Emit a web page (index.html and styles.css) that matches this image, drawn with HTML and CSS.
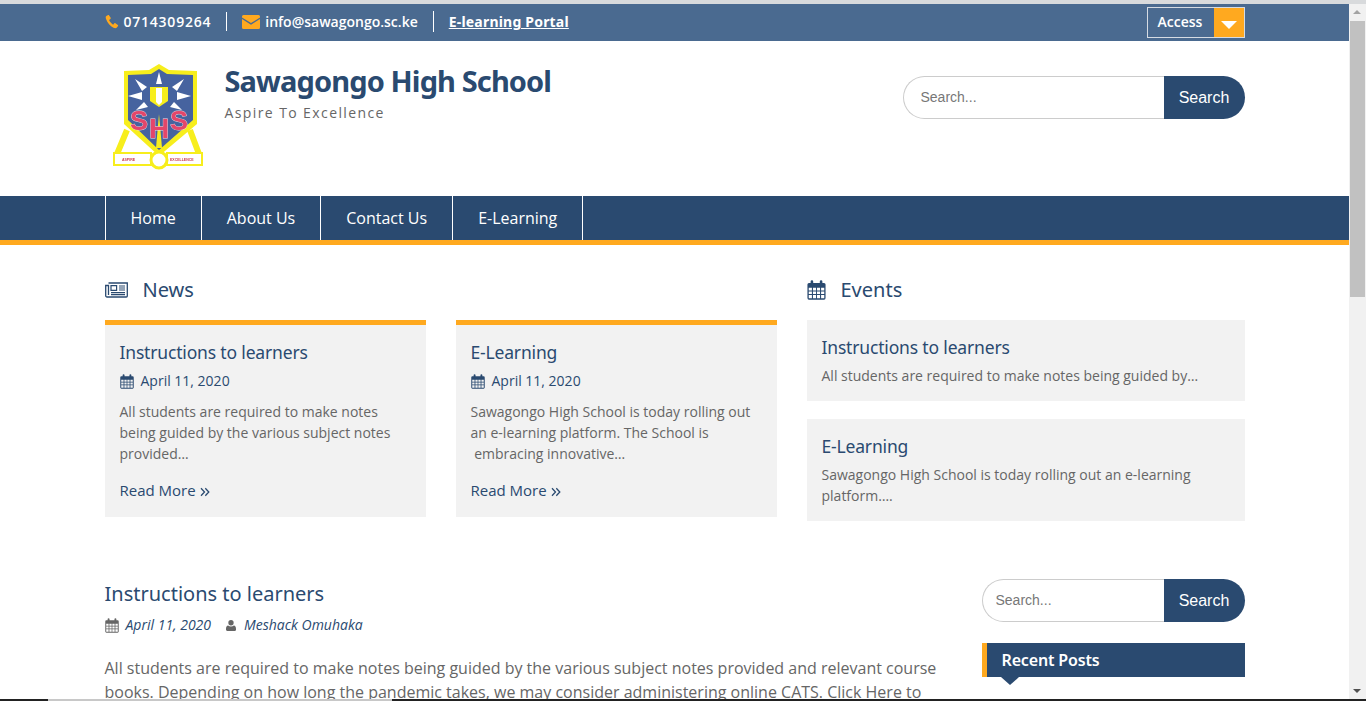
FILE: index.html
```html
<!DOCTYPE html>
<html lang="en">
<head>
<meta charset="utf-8">
<title>Sawagongo High School</title>
<link rel="stylesheet" href="styles.css">
</head>
<body>
<svg class="defs" width="0" height="0" aria-hidden="true">
  <symbol id="cal" viewBox="0 0 16 17">
    <path fill="currentColor" fill-rule="evenodd" d="M3 2.500V1.300a1.100 1.100 0 0 1 2.200 0v1.200h5.600V1.300a1.100 1.100 0 0 1 2.200 0v1.200h1.400A1.300 1.300 0 0 1 15.700 3.800v11.600a1.300 1.300 0 0 1-1.300 1.300H1.600A1.300 1.300 0 0 1 .3 15.400V3.800A1.300 1.300 0 0 1 1.600 2.500zM1.400 6.600v2.300h2.700V6.600zm3.600 0v2.300h2.600V6.600zm3.400 0v2.300H11V6.600zm3.500 0v2.300h2.700V6.600zM1.400 9.700V12h2.700V9.700zm3.600 0V12h2.600V9.700zm3.400 0V12H11V9.700zm3.500 0V12h2.700V9.700zM1.400 12.800v2.800h2.700v-2.800zm3.600 0v2.800h2.600v-2.800zm3.400 0v2.800H11v-2.800zm3.500 0v2.800h2.700v-2.800z"/>
  </symbol>
  <symbol id="dbl" viewBox="0 0 10 10">
    <path fill="none" stroke="currentColor" stroke-width="1.300" d="M1 1.300 4.500 5 1 8.700M5.300 1.300 8.800 5 5.300 8.700"/>
  </symbol>
</svg>
<div class="window">
  <div class="page">
    <div class="topbar">
      <div class="wrap topbar-in">
        <div class="contacts">
          <span class="contact first">
            <svg class="ic-phone" viewBox="0 0 16 16"><path fill="#ffa91f" d="M3.600.7 1.500 1.700C.6 2.300.7 3.700 1.200 5.200c1.500 4.300 4.800 8.100 8.500 9.900 1.300.6 2.700.8 3.600 0l1.600-1.900c.3-.4.200-.9-.2-1.200l-2.800-2c-.4-.3-.9-.2-1.200.1l-1 1.200c-.2.200-.5.300-.8.100-1.700-1-3.300-2.900-4.100-4.700-.1-.3 0-.6.200-.8l1.200-.9c.4-.3.500-.8.300-1.200L4.700 1c-.2-.4-.7-.5-1.100-.3z"/></svg>
            <span class="phone">0714309264</span>
          </span>
          <span class="contact">
            <svg class="ic-mail" viewBox="0 0 18 14"><path fill="#ffa91f" d="M1.500 0h15A1.500 1.500 0 0 1 18 1.500v.9L9 8 0 2.400v-.9A1.500 1.500 0 0 1 1.500 0zM0 4l9 5.700L18 4v8.500a1.500 1.500 0 0 1-1.500 1.500h-15A1.500 1.500 0 0 1 0 12.500z"/></svg>
            info@sawagongo.sc.ke
          </span>
          <a class="contact portal" href="#">E-learning Portal</a>
        </div>
        <div class="access">
          <span class="access-label">Access</span>
          <span class="access-btn"><i class="caret"></i></span>
        </div>
      </div>
    </div>

    <header class="wrap masthead">
      <div class="brand">
        <svg class="logo" viewBox="0 0 92 106">
          <path fill="none" stroke="#f7ee1c" stroke-width="6" d="M14 66 4 90M77 66 86 90"/>
          <path fill="#f7ee1c" d="M46 0 56 6 84 7V60L46 92 11 60V7L36 6z"/>
          <rect x="1" y="89" width="37" height="12" fill="#fff" stroke="#f7ee1c" stroke-width="2"/>
          <rect x="54" y="89" width="35" height="12" fill="#fff" stroke="#f7ee1c" stroke-width="2"/>
          <circle cx="46" cy="96" r="8" fill="#fff" stroke="#f7ee1c" stroke-width="3"/>
          <path fill="#46639f" d="M15 11 38 10 46 5 54 10 80 11V56L46 86 15 56z"/>
          <path fill="#f7ee1c" d="M37 23H55V37L46 43 37 37z"/>
          <path fill="#fff" d="M43 24H49V38L46 41 43 38zM46 8 49 20H43zM22 15 34 23 29 27zM71 15 59 23 64 27zM15 32 29 28V36zM78 32 64 28V36zM23 46 31 38 35 43zM69 46 61 38 57 43z"/>
          <path fill="#f7ee1c" d="M46 50 49 84H43z"/>
          <text class="logo-s" x="17" y="66">S</text>
          <text class="logo-h" x="36" y="74">H</text>
          <text class="logo-s" x="57" y="66">S</text>
          <text class="logo-r" x="9" y="97">ASPIRE</text>
          <text class="logo-r" x="57" y="97">EXCELLENCE</text>
        </svg>
        <div class="brand-text">
          <h1>Sawagongo High School</h1>
          <p>Aspire To Excellence</p>
        </div>
      </div>
      <form class="search search-top">
        <input type="text" placeholder="Search...">
        <button type="button">Search</button>
      </form>
    </header>

    <nav class="nav">
      <div class="wrap">
        <ul>
          <li>Home</li>
          <li>About Us</li>
          <li>Contact Us</li>
          <li>E-Learning</li>
        </ul>
      </div>
    </nav>

    <div class="wrap home">
      <section class="news">
        <h2 class="sec-title">
          <svg class="ic-news" viewBox="0 0 23 16"><path fill="none" stroke="currentColor" stroke-width="1.300" d="M3.500 1h18.800v13a1 1 0 0 1-1 1H2a1.300 1.300 0 0 1-1.300-1.300V3.500H3.500V13"/><path fill="none" stroke="currentColor" stroke-width="1.200" d="M6 3.600h5.600v4.700H6zM14 4h6M14 6h6M14 8h6M6 10.600h14M6 12.700h14"/></svg>
          News
        </h2>
        <div class="cards">
          <article class="card">
            <h3>Instructions to learners</h3>
            <div class="date"><svg class="cal"><use href="#cal"/></svg>April 11, 2020</div>
            <p>All students are required to make notes being guided by the various subject notes provided…</p>
            <a class="more" href="#">Read More <svg class="chev"><use href="#dbl"/></svg></a>
          </article>
          <article class="card">
            <h3>E-Learning</h3>
            <div class="date"><svg class="cal"><use href="#cal"/></svg>April 11, 2020</div>
            <p>Sawagongo High School is today rolling out an e-learning platform. The School is<br>&nbsp;embracing innovative…</p>
            <a class="more" href="#">Read More <svg class="chev"><use href="#dbl"/></svg></a>
          </article>
        </div>
      </section>
      <section class="events">
        <h2 class="sec-title">
          <svg class="ic-events"><use href="#cal"/></svg>
          Events
        </h2>
        <article class="event">
          <h3>Instructions to learners</h3>
          <p>All students are required to make notes being guided by…</p>
        </article>
        <article class="event">
          <h3>E-Learning</h3>
          <p>Sawagongo High School is today rolling out an e-learning platform….</p>
        </article>
      </section>
    </div>

    <div class="wrap lower">
      <main class="post">
        <h2>Instructions to learners</h2>
        <div class="meta">
          <svg class="cal"><use href="#cal"/></svg><em>April 11, 2020</em>
          <svg class="ic-user" viewBox="0 0 12 13"><path fill="currentColor" d="M6 0a3.200 3.200 0 1 1 0 6.400A3.200 3.200 0 0 1 6 0zM2.500 6.500C3.500 7.300 4.700 7.700 6 7.700s2.500-.4 3.500-1.200c1.500.3 2.500 1.700 2.500 3.800v1.300c0 1-.7 1.400-1.500 1.400h-9C.7 13 0 12.600 0 11.600v-1.300c0-2.100 1-3.500 2.500-3.800z"/></svg><em>Meshack Omuhaka</em>
        </div>
        <p>All students are required to make notes being guided by the various subject notes provided and relevant course books. Depending on how long the pandemic takes, we may consider administering online CATS. Click Here to</p>
      </main>
      <aside class="side">
        <form class="search search-side">
          <input type="text" placeholder="Search...">
          <button type="button">Search</button>
        </form>
        <h4 class="widget-title">Recent Posts</h4>
      </aside>
    </div>
  </div>
  <div class="scrollbar">
    <span class="arrow up"></span>
    <span class="thumb"></span>
    <span class="track"></span>
    <span class="arrow down"></span>
  </div>
  <div class="taskline">
    <span class="seg seg-a"></span><span class="seg seg-b"></span><span class="seg seg-c"></span>
  </div>
</div>
</body>
</html>
```
FILE: styles.css
```css
* { box-sizing: border-box; }
html, body { margin: 0; height: 100%; overflow: hidden; }
body { font-family: "Open Sans", sans-serif; color: #666; background: #fff; }
.defs { position: absolute; }
.window { display: flex; height: 701px; position: relative; overflow: hidden; border-top: 4px solid #d8dadc; }
.page { width: 1349px; flex: none; overflow: hidden; }
.wrap { width: 1140px; margin: 0 auto; }

.topbar { height: 37px; background: #4a6a90; color: #fff; }
.topbar-in { display: flex; justify-content: space-between; align-items: center; height: 37px; }
.contacts { display: flex; align-items: center; font-size: 14px; font-weight: 600; padding-bottom: 2px; }
.contact { display: flex; align-items: center; height: 19px; padding: 0 15px; border-left: 1px solid #fff; }
.contact.first { padding-left: 0; border-left: 0; }
.phone { letter-spacing: .77px; }
.ic-phone { width: 14px; height: 15px; margin-right: 5px; }
.ic-mail { width: 18px; height: 14px; margin-right: 5px; }
.portal { height: 21px; color: #fff; text-decoration: underline; font-family: "Noto Sans", sans-serif; font-weight: 700; letter-spacing: .2px; }
.access { display: flex; width: 98px; height: 31px; border: 1px solid #d5dbe3; font-size: 14px; font-weight: 600; }
.access-label { flex: 1; padding-left: 10px; line-height: 27px; }
.access-btn { width: 30px; background: #ffa91f; display: flex; justify-content: center; padding-top: 13px; }
.caret { width: 0; height: 0; border-left: 8px solid transparent; border-right: 8px solid transparent; border-top: 8px solid #fff; }

.masthead { display: flex; justify-content: space-between; height: 155px; }
.brand { display: flex; padding-top: 22px; padding-left: 8px; }
.logo { width: 92px; height: 106px; margin: 1px 20px 0 0; filter: blur(.4px); }
.logo-s, .logo-h { fill: #e4466a; stroke: #f3d9e0; stroke-width: .8px; paint-order: stroke; }
.logo-s { font: 700 27px "Liberation Sans", sans-serif; }
.logo-h { font: 700 28px "Liberation Sans", sans-serif; }
.logo-r { font: 700 3.500px "Liberation Sans", sans-serif; fill: #c9394f; }
.brand-text h1 { margin: 0; font: 700 29px/36px "Noto Sans", sans-serif; color: #2a4a70; letter-spacing: -.88px; }
.brand-text p { margin: 4px 0 0; font-size: 14px; line-height: 20px; letter-spacing: 1.4px; color: #666; }

.search { display: flex; height: 43px; font-family: "Liberation Sans", sans-serif; }
.search input { flex: 1; min-width: 0; height: 43px; border: 1px solid #ccc; border-right: 0; border-radius: 22px 0 0 22px; font: 14px "Liberation Sans", sans-serif; outline: 0; background: #fff; padding-bottom: 2px; }
.search input::placeholder { color: #777; }
.search button { width: 81px; height: 43px; border: 0; border-radius: 0 22px 22px 0; background: #2a4a70; color: #fff; font: 16px "Liberation Sans", sans-serif; padding: 0; }
.search-top { width: 342px; margin-top: 35px; }
.search-top input { padding-left: 17px; }
.search-side { width: 263px; }
.search-side input { padding-left: 13px; }

.nav { height: 49px; background: #2a4a70; border-bottom: 5px solid #ffa91f; }
.nav ul { display: flex; height: 44px; margin: 0; padding: 0; list-style: none; border-left: 1px solid #fff; width: max-content; }
.nav li { padding: 0 25px; line-height: 44px; color: #fff; font-size: 16px; border-right: 1px solid #fff; }

.home { display: flex; gap: 30px; padding-top: 30px; }
.news { width: 672px; }
.events { width: 438px; }
.sec-title { display: flex; align-items: center; margin: 0 0 15px; height: 30px; font: 400 20px/30px "Noto Sans", sans-serif; color: #2a4a70; }
.ic-news { width: 23px; height: 16px; margin-right: 15px; }
.ic-events { width: 19px; height: 20px; margin-right: 15px; color: #2a4a70; }
.cards { display: flex; gap: 30px; }
.card { width: 321px; height: 197px; background: #f2f2f2; border-top: 5px solid #ffa91f; padding: 15px 15px 0; }
.card h3, .event h3 { margin: 0; font: 400 17.500px/24px "Noto Sans", sans-serif; letter-spacing: -.17px; color: #2a4a70; }
.date { display: flex; align-items: center; margin-top: 7px; font-size: 14px; line-height: 20px; color: #2a4a70; }
.cal { width: 14px; height: 15px; margin-right: 7px; color: #2a4a70; flex: none; }
.card p { margin: 10px 0 0; font-size: 14px; line-height: 21px; color: #666; }
.more { display: block; margin-top: 15px; font-size: 15px; line-height: 22px; color: #2a4a70; text-decoration: none; }
.chev { width: 10px; height: 10px; vertical-align: -1px; }
.event { background: #f2f2f2; padding: 15px 15px 0; height: 81px; margin-bottom: 18px; }
.event + .event { height: 102px; margin-bottom: 0; }
.event p { margin: 6px 0 0; font-size: 14px; line-height: 21px; color: #666; }

.lower { display: flex; justify-content: space-between; padding-top: 58px; }
.post { width: 840px; }
.post h2 { margin: 0; font: 400 20px/30px "Noto Sans", sans-serif; color: #2a4a70; }
.meta { display: flex; align-items: center; margin-top: 6px; font-size: 14px; line-height: 20px; color: #2a4a70; }
.meta .cal { color: #666; }
.ic-user { width: 10px; height: 11px; margin: 0 8px 0 15px; color: #666; }
.post p { margin: 21px 0 0; font-size: 16px; line-height: 24px; color: #666; }
.side { width: 263px; }
.widget-title { position: relative; margin: 21px 0 0; height: 34px; background: #2a4a70; border-left: 5px solid #ffa91f; padding-left: 15px; color: #fff; font: 600 16px/34px "Noto Sans", sans-serif; letter-spacing: -.15px; }
.widget-title::after { content: ""; position: absolute; left: 14px; top: 34px; border-left: 9px solid transparent; border-right: 9px solid transparent; border-top: 8px solid #2a4a70; }

.scrollbar { width: 17px; flex: none; display: flex; flex-direction: column; background: #f1f1f1; }
.arrow { height: 17px; flex: none; position: relative; }
.arrow::after { content: ""; position: absolute; left: 4px; border-left: 4px solid transparent; border-right: 4px solid transparent; }
.arrow.up::after { top: 6px; border-bottom: 4px solid #a3a3a3; }
.arrow.down::after { top: 5px; border-top: 4px solid #505050; }
.thumb { height: 276px; flex: none; background: #c1c1c1; margin: 0 1px; }
.track { flex: 1; }

.taskline { position: absolute; left: 0; right: 0; bottom: 0; height: 2px; display: flex; }
.seg { height: 2px; display: block; }
.seg-a { width: 48px; background: #222; }
.seg-b { width: 344px; background: #c8c8c8; }
.seg-c { flex: 1; background: #222; }
```
